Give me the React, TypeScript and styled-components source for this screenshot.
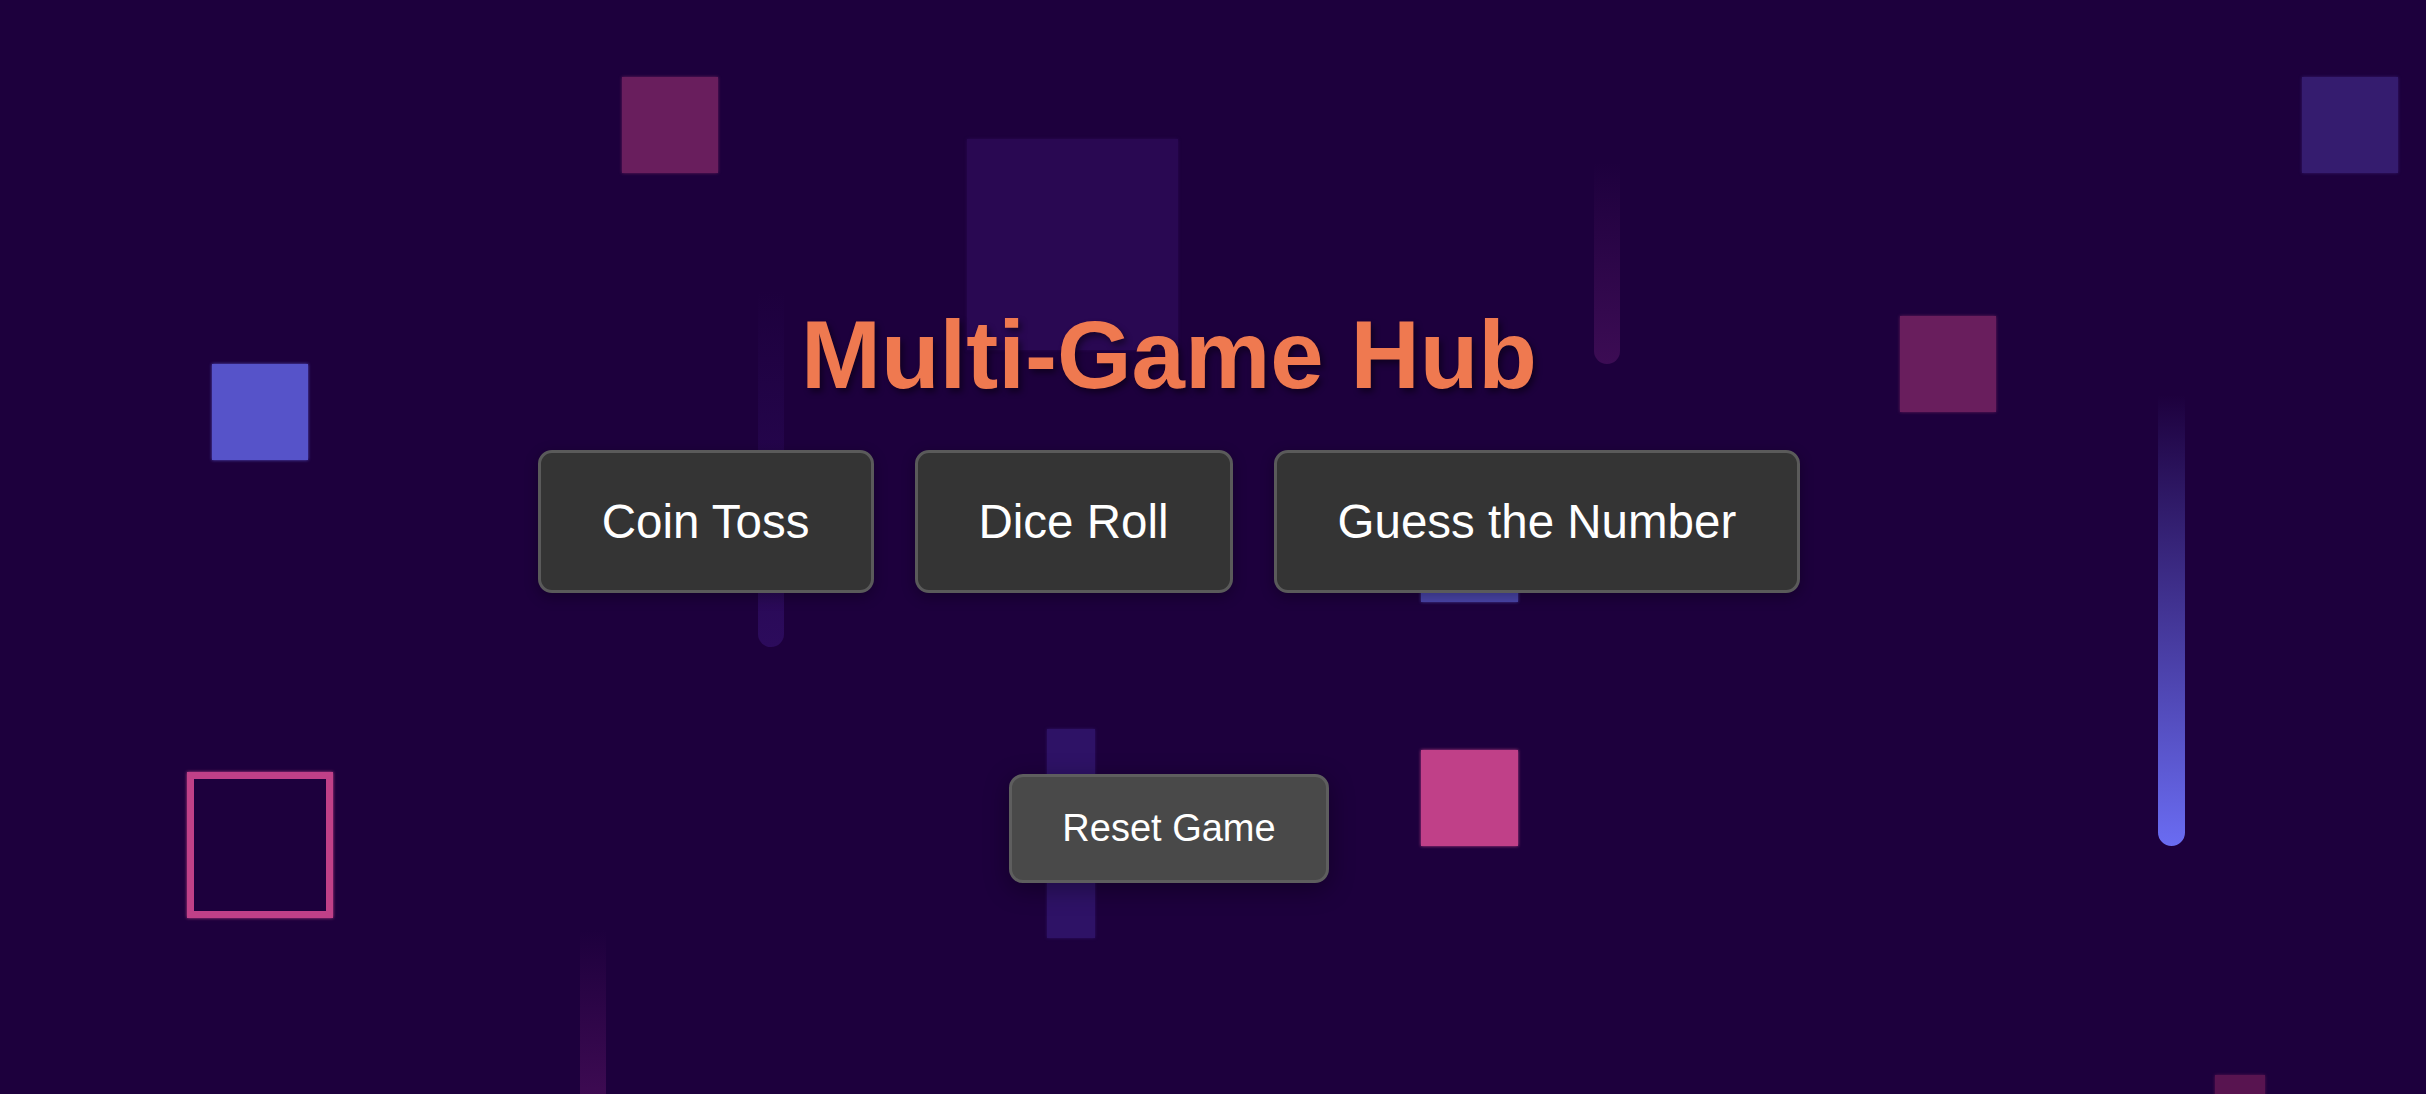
import React from "react";
import styled, { createGlobalStyle } from "styled-components";

const GlobalStyle = createGlobalStyle`
  html, body {
    margin: 0;
    padding: 0;
    background: #1d003d;
  }
  body {
    font-family: "Liberation Sans", Arial, Helvetica, sans-serif;
    overflow: hidden;
  }
  * { box-sizing: border-box; }
`;

const Page = styled.div`
  position: relative;
  width: 100%;
  height: 100vh;
  min-height: 1094px;
  background: #1d003d;
  overflow: hidden;
`;

const Backdrop = styled.div`
  position: absolute;
  inset: 0;
  z-index: 0;
  pointer-events: none;
`;

type Box = { $x: number; $y: number; $w: number; $h: number };

const Block = styled.div<Box & { $color: string }>`
  position: absolute;
  left: ${(p) => p.$x}px;
  top: ${(p) => p.$y}px;
  width: ${(p) => p.$w}px;
  height: ${(p) => p.$h}px;
  background: ${(p) => p.$color};
  box-shadow: 0 0 3px ${(p) => p.$color};
`;

const Frame = styled.div<Box & { $color: string }>`
  position: absolute;
  left: ${(p) => p.$x}px;
  top: ${(p) => p.$y}px;
  width: ${(p) => p.$w}px;
  height: ${(p) => p.$h}px;
  border: 7px solid ${(p) => p.$color};
  box-shadow: 0 0 3px ${(p) => p.$color};
`;

const Streak = styled.div<Box & { $color: string }>`
  position: absolute;
  left: ${(p) => p.$x}px;
  top: ${(p) => p.$y}px;
  width: ${(p) => p.$w}px;
  height: ${(p) => p.$h}px;
  border-radius: 0 0 ${(p) => p.$w / 2}px ${(p) => p.$w / 2}px;
  background: linear-gradient(to bottom, rgba(29, 0, 61, 0) 0%, ${(p) => p.$color} 100%);
`;

const Main = styled.main`
  position: relative;
  z-index: 1;
  display: flex;
  flex-direction: column;
  align-items: center;
  padding: 300px 88px 0 0;
`;

const Title = styled.h1`
  margin: 0;
  font-family: "Liberation Sans", Arial, Helvetica, sans-serif;
  font-size: 96px;
  font-weight: 700;
  line-height: normal;
  color: #ef7950;
  text-shadow: 3px 4px 6px rgba(0, 0, 0, 0.45);
`;

const GameRow = styled.div`
  display: flex;
  gap: 41px;
  margin-top: 40px;
`;

const GameButton = styled.button`
  font-family: "Liberation Sans", Arial, Helvetica, sans-serif;
  font-size: 47.5px;
  line-height: normal;
  color: #ffffff;
  background: #343434;
  border: 3px solid #5a5a5a;
  border-radius: 14px;
  padding: 41px 61px;
  cursor: pointer;
  box-shadow: 0 4px 14px rgba(0, 0, 0, 0.3);
`;

const ResetButton = styled(GameButton)`
  margin-top: 181px;
  font-size: 38px;
  padding: 30px 50px;
  background: #494949;
  border-color: #5e5e5e;
  box-shadow: 0 6px 24px rgba(0, 0, 0, 0.35);
`;

const blocks = [
  { x: 622, y: 77, w: 96, h: 96, c: "#691e5d" },
  { x: 967, y: 139, w: 211, h: 211, c: "#290852" },
  { x: 1900, y: 316, w: 96, h: 96, c: "#691e5d" },
  { x: 2302, y: 77, w: 96, h: 96, c: "#351c6f" },
  { x: 212, y: 364, w: 96, h: 96, c: "#5653c9" },
  { x: 1421, y: 506, w: 97, h: 96, c: "#4a45a9" },
  { x: 1047, y: 729, w: 48, h: 209, c: "#2e1266" },
  { x: 1421, y: 750, w: 97, h: 96, c: "#c04088" },
  { x: 2215, y: 1075, w: 50, h: 50, c: "#581450" },
];

const streaks = [
  { x: 758, y: 290, w: 26, h: 357, c: "#2c0b5c" },
  { x: 1594, y: 162, w: 26, h: 202, c: "#3c0c54" },
  { x: 2158, y: 395, w: 27, h: 451, c: "#6a6cf2" },
  { x: 580, y: 930, w: 26, h: 190, c: "#420c55" },
];

export default function App() {
  return (
    <>
      <GlobalStyle />
      <Page>
        <Backdrop>
          {blocks.map((b, i) => (
            <Block key={`b${i}`} $x={b.x} $y={b.y} $w={b.w} $h={b.h} $color={b.c} />
          ))}
          {streaks.map((s, i) => (
            <Streak key={`s${i}`} $x={s.x} $y={s.y} $w={s.w} $h={s.h} $color={s.c} />
          ))}
          <Frame $x={187} $y={772} $w={146} $h={146} $color="#c04088" />
        </Backdrop>
        <Main>
          <Title>Multi-Game Hub</Title>
          <GameRow>
            <GameButton>Coin Toss</GameButton>
            <GameButton>Dice Roll</GameButton>
            <GameButton>Guess the Number</GameButton>
          </GameRow>
          <ResetButton>Reset Game</ResetButton>
        </Main>
      </Page>
    </>
  );
}
